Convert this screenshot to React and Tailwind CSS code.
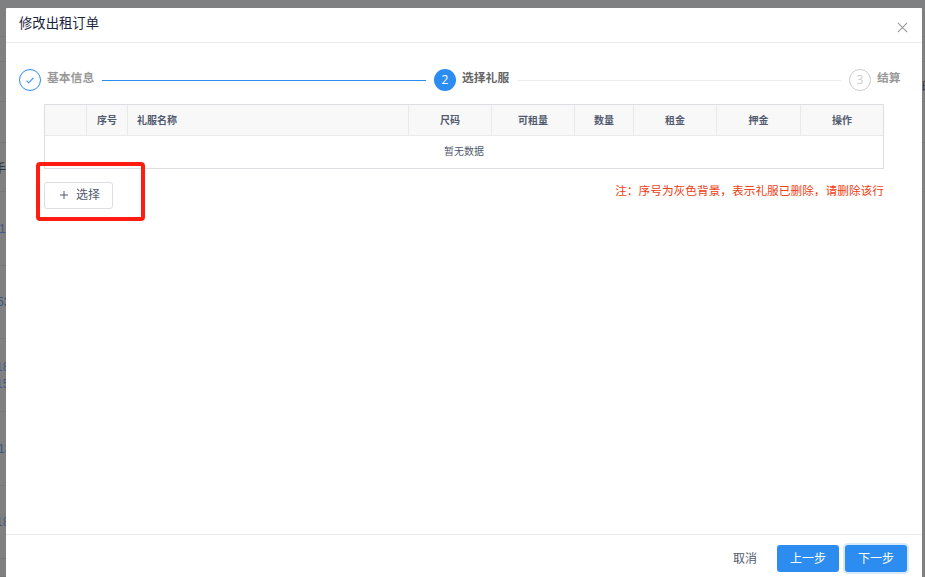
import React from 'react';

const leftRows = [
  { h: 'h-[37px]', text: '' },
  { h: 'h-[25px]', text: '' },
  { h: 'h-[40px]', text: '' },
  { h: 'h-[41px]', text: '' },
  { h: 'h-[49px]', text: '手', x: '-ml-[6px] pt-[4px]', color: 'text-[#33363d]' },
  { h: 'h-[74px]', text: '1', x: '-ml-[1px] pt-px', color: 'text-[#46568c]' },
  { h: 'h-[73px]', text: '53', x: '-ml-[3px] pt-px', color: 'text-[#34587f]' },
  { h: 'h-[73px]', text: '18\n15', x: '-ml-[4px] pt-px', color: 'text-[#46568c]' },
  { h: 'h-[74px]', text: '13', x: '-ml-[2px] pt-px', color: 'text-[#34587f]' },
  { h: 'h-[73px]', text: '18', x: '-ml-[4px] pt-px', color: 'text-[#46568c]' },
  { h: 'h-[18px]', text: '' },
];

const rightRows = [
  { h: 'h-[37px]', text: '' },
  { h: 'h-[25px]', text: '' },
  { h: 'h-[40px]', text: '时', x: 'pt-[12px]', color: 'text-[#33363d]' },
  { h: 'h-[41px]', text: '' },
  { h: 'h-[49px]', text: '' },
];

const columns = [
  ['', 'w-[42px]', 'justify-center'],
  ['序号', 'w-[41px]', 'justify-center'],
  ['礼服名称', 'w-[281px]', 'pl-[9px]'],
  ['尺码', 'w-[83px]', 'justify-center'],
  ['可租量', 'w-[83px]', 'justify-center'],
  ['数量', 'w-[59px]', 'justify-center'],
  ['租金', 'w-[83px]', 'justify-center'],
  ['押金', 'w-[84px]', 'justify-center'],
  ['操作', 'w-[82px]', 'justify-center'],
];

function PageEdge({ rows, width }) {
  return (
    <div
      className={`shrink-0 overflow-hidden font-['Liberation_Sans','Noto_Sans_CJK_SC',sans-serif] ${width}`}
    >
      {rows.map((row, i) => (
        <div
          key={i}
          className={`flex items-center overflow-hidden border-b border-[#787879] ${row.h}`}
        >
          <span
            className={`shrink-0 whitespace-pre text-[12px] leading-[17px] ${row.x || ''} ${row.color || ''}`}
          >
            {row.text}
          </span>
        </div>
      ))}
    </div>
  );
}

function Steps() {
  return (
    <div className="flex h-[22px] items-center text-[11.8px] font-bold">
      <span className="flex size-[22px] shrink-0 items-center justify-center rounded-full border border-[#2d8cf0]">
        <svg width="8" height="7" viewBox="0 0 8 7" fill="none" stroke="#2d8cf0" strokeWidth="1.1">
          <path d="M.6 3.7 2.7 5.8 7.4.9" />
        </svg>
      </span>
      <span className="-mt-[6px] ml-[6px] w-[55px] shrink-0 text-[#999]">基本信息</span>
      <span className="mt-px h-px w-[324px] bg-[#2d8cf0]" />
      <span className="ml-[8px] flex size-[22px] shrink-0 items-center justify-center rounded-full bg-[#2d8cf0] font-['Open_Sans'] text-[12px] font-normal text-white">
        2
      </span>
      <span className="-mt-[6px] ml-[6px] w-[56px] shrink-0 text-[#666]">选择礼服</span>
      <span className="mt-px h-px w-[323px] bg-[#e8eaec]" />
      <span className="ml-[8px] flex size-[22px] shrink-0 items-center justify-center rounded-full border border-[#ccc] font-['Open_Sans'] text-[12px] font-normal text-[#ccc]">
        3
      </span>
      <span className="-mt-[6px] ml-[6px] shrink-0 text-[#999]">结算</span>
    </div>
  );
}

function DressTable() {
  return (
    <div className="h-[65px] w-[840px] border border-[#dcdee2] text-[10px] text-[#515a6e]">
      <div className="flex h-[31px] bg-[#f8f8f9]">
        {columns.map(([label, width, align], i) => (
          <div
            key={i}
            className={`flex h-full shrink-0 items-center border-b border-[#e8eaec] pb-[2px] font-bold ${
              i < columns.length - 1 ? 'border-r' : ''
            } ${width} ${align}`}
          >
            {label}
          </div>
        ))}
      </div>
      <div className="flex h-[32px] items-center justify-center pb-[3px]">暂无数据</div>
    </div>
  );
}

export default function App() {
  return (
    <div className="relative flex h-[577px] w-[925px] overflow-hidden bg-[#808080] font-['Noto_Sans_CJK_SC',sans-serif]">
      <PageEdge rows={leftRows} width="w-[6px]" />
      <div className="flex w-[916px] shrink-0 flex-col">
        <div className="h-[8px] shrink-0 bg-[#7f8082]" />
        <div className="flex flex-1 flex-col rounded-t-[1px] bg-white">
          <header className="flex h-[35px] shrink-0 justify-between border-b border-[#e8eaec] pl-[13px] pr-[14px]">
            <h1 className="mt-[5px] text-[13.33px] leading-[20px] text-[#17233d]">修改出租订单</h1>
            <svg className="mt-[14px]" width="11" height="11" viewBox="0 0 11 11" stroke="#999" strokeWidth="1.1">
              <path d="M.9.9 10.1 10.1M10.1.9.9 10.1" />
            </svg>
          </header>

          <main className="flex-1 pl-[13px] pt-[26px]">
            <Steps />
            <div className="ml-[25px] mt-[13px] w-[840px]">
              <DressTable />
              <div className="flex items-start justify-between">
                <button className="mt-[13px] flex h-[27px] w-[69px] items-center rounded-[3px] border border-[#dcdee2] bg-white pl-[15px] text-[12px] text-[#515a6e]">
                  <svg className="-mt-px" width="8" height="8" viewBox="0 0 8 8" stroke="#515a6e" strokeWidth="1">
                    <path d="M4 0v8M0 4h8" />
                  </svg>
                  <span className="ml-[8px] pb-[3px] leading-[16px]">选择</span>
                </button>
                <p className="mt-[12px] text-[11.7px] leading-[17px] text-[#ed4014]">
                  注：序号为灰色背景，表示礼服已删除，请删除该行
                </p>
              </div>
            </div>
          </main>

          <footer className="flex h-[43px] shrink-0 items-start justify-end border-t border-[#e8eaec] pr-[15px] pt-[10px] text-[12px]">
            <button className="mr-[20px] h-[27px] pb-px text-[#515a6e]">取消</button>
            <button className="mr-[6px] h-[27px] w-[62px] rounded-[3px] bg-[#2d8cf0] pb-px text-white">上一步</button>
            <button className="h-[27px] w-[62px] rounded-[3px] bg-[#2d8cf0] pb-px text-white shadow-[0_0_0_2px_rgba(45,140,240,0.2)]">
              下一步
            </button>
          </footer>
        </div>
      </div>
      <PageEdge rows={rightRows} width="w-[3px]" />
      <div className="pointer-events-none absolute left-[36px] top-[162px] h-[59px] w-[109px] rounded-[4px] border-4 border-[#ff1d12]" />
    </div>
  );
}
